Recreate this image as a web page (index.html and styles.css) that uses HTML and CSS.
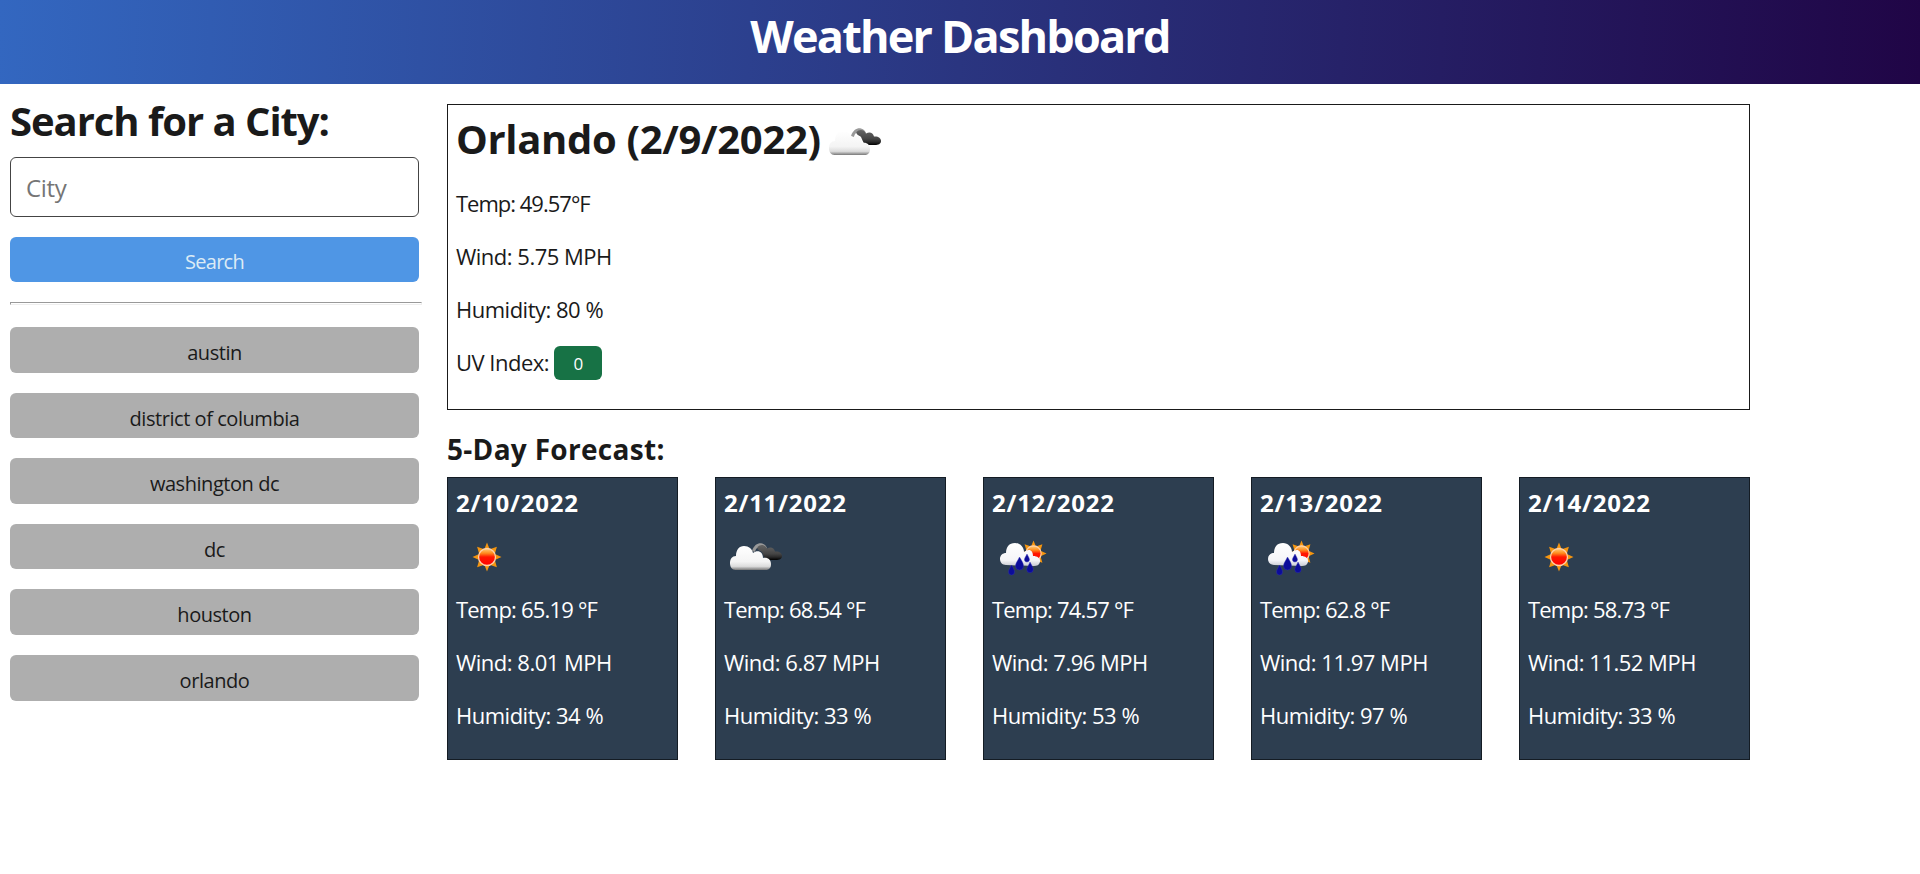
FILE: index.html
```html
<!DOCTYPE html>
<html lang="en">
<head>
<meta charset="utf-8">
<title>Weather Dashboard</title>
<link rel="stylesheet" href="styles.css">
</head>
<body>
<svg class="defs" aria-hidden="true">
  <defs>
    <linearGradient id="white-cloud" x1="0" y1="0" x2="0" y2="1">
      <stop offset="0" stop-color="#fff"/><stop offset=".65" stop-color="#f4f4f4"/><stop offset=".85" stop-color="#dcdcdc"/><stop offset="1" stop-color="#787878"/>
    </linearGradient>
    <linearGradient id="rain-cloud" x1="0" y1="0" x2="0" y2="1">
      <stop offset="0" stop-color="#fff"/><stop offset=".75" stop-color="#f5f5f8"/><stop offset="1" stop-color="#c9cbd3"/>
    </linearGradient>
    <linearGradient id="dark-cloud" x1="0" y1="0" x2="0" y2="1">
      <stop offset="0" stop-color="#666"/><stop offset=".6" stop-color="#444"/><stop offset=".8" stop-color="#2a2a2a"/><stop offset="1" stop-color="#000"/>
    </linearGradient>
    <linearGradient id="sun-core" x1="0" y1="0" x2="0" y2="1">
      <stop offset="0" stop-color="#ffd27a"/><stop offset=".28" stop-color="#ff8a1c"/><stop offset=".5" stop-color="#ff1800"/><stop offset="1" stop-color="#f00"/>
    </linearGradient>
    <symbol id="sun" viewBox="0 0 30 30">
      <path fill="#f5950f" d="M15 .5 17.700 7.200 24.900 4.800 22.800 12 29.500 15 22.800 18 24.900 25.200 17.700 22.800 15 29.500 12.300 22.800 5.100 25.200 7.200 18 .5 15 7.200 12 5.100 4.800 12.300 7.200Z"/>
      <circle cx="15" cy="15" r="8.500" fill="url(#sun-core)" stroke="#ffd0a8" stroke-width="1.300"/>
    </symbol>
    <symbol id="clouds" viewBox="0 0 54 28">
      <path fill="#999" d="M23 9C25 3 29 .8 33 1.500C36 2 37 4 38 6L31 9C30 5 27 5 26 10Z"/>
      <path fill="url(#dark-cloud)" d="M28.500 5C31 2 36 2 38 6.500C42 4.500 45 6 46 9.500C50 9 53 11 53 14C53 17 50 18 47 18H37C35 15 34 12 33 10C31 8 28 8 28.500 5Z"/>
      <path fill="url(#white-cloud)" d="M6.500 28C3 28 1 25 1 21C1 17 3 14 7 14C7 8 10 4 15 4C20 4 23 7 24 11C29 7 34 10 34 16C39 15 42 18 42 22C42 26 40 28 36 28Z"/>
    </symbol>
    <symbol id="rain" viewBox="0 0 48 36">
      <use href="#sun" x="20" y="0" width="27" height="27"/>
      <path fill="url(#rain-cloud)" d="M6 25C2 25 0 22 0 19C0 15 3 13 6 13C6 7 9 3 15 3C20 3 24 7 24 12C29 8 33 10 33 16C38 16 41 19 40 22C39 25 37 26 34 26Z"/>
      <g fill="#0c0c9a" stroke="#3636b8" stroke-width=".4">
        <path d="M19.500 17C22 21 23.500 23.500 23.500 26A4 4 0 0 1 15.500 26C15.500 23.500 17.500 21 19.500 17Z"/>
        <path d="M27 14C28.500 17 29.500 18 29.500 20A2.600 2.600 0 0 1 24.400 20C24.400 18 25.500 17 27 14Z"/>
        <path d="M11.500 25C13.500 28 14.500 30 14.500 32A3 3 0 0 1 8.500 32C8.500 30 10 28 11.500 25Z"/>
        <path d="M30 22C32 26 33.200 27.500 33.200 29.500A3.200 3.200 0 0 1 26.800 29.500C26.800 27.500 28.500 26 30 22Z"/>
      </g>
    </symbol>
  </defs>
</svg>
<header class="banner"><h1 class="banner-title">Weather Dashboard</h1></header>
<div class="layout">
  <aside class="sidebar">
    <h2 class="search-title">Search for a City:</h2>
    <input class="city-input" type="text" placeholder="City">
    <button class="button search">Search</button>
    <hr class="rule">
    <div class="history">
      <button class="button city">austin</button>
      <button class="button city">district of columbia</button>
      <button class="button city">washington dc</button>
      <button class="button city">dc</button>
      <button class="button city">houston</button>
      <button class="button city">orlando</button>
    </div>
  </aside>
  <main class="content">
    <section class="current">
      <h2 class="current-title"><span>Orlando (2/9/2022)</span><svg class="current-icon"><use href="#clouds"/></svg></h2>
      <p class="reading temp">Temp: 49.57°F</p>
      <p class="reading">Wind: 5.75 MPH</p>
      <p class="reading">Humidity: 80 %</p>
      <p class="reading uv"><span class="uv-label">UV Index:</span><span class="uv-badge">0</span></p>
    </section>
    <h3 class="forecast-title">5-Day Forecast:</h3>
    <section class="forecast">
      <article class="day">
        <h4 class="date">2/10/2022</h4>
        <div class="icon"><svg class="icon-sun"><use href="#sun"/></svg></div>
        <p class="reading temp">Temp: 65.19 °F</p><p class="reading">Wind: 8.01 MPH</p><p class="reading">Humidity: 34 %</p>
      </article>
      <article class="day">
        <h4 class="date">2/11/2022</h4>
        <div class="icon"><svg class="icon-clouds"><use href="#clouds"/></svg></div>
        <p class="reading temp">Temp: 68.54 °F</p><p class="reading">Wind: 6.87 MPH</p><p class="reading">Humidity: 33 %</p>
      </article>
      <article class="day">
        <h4 class="date">2/12/2022</h4>
        <div class="icon"><svg class="icon-rain"><use href="#rain"/></svg></div>
        <p class="reading temp">Temp: 74.57 °F</p><p class="reading">Wind: 7.96 MPH</p><p class="reading">Humidity: 53 %</p>
      </article>
      <article class="day">
        <h4 class="date">2/13/2022</h4>
        <div class="icon"><svg class="icon-rain"><use href="#rain"/></svg></div>
        <p class="reading temp">Temp: 62.8 °F</p><p class="reading">Wind: 11.97 MPH</p><p class="reading">Humidity: 97 %</p>
      </article>
      <article class="day">
        <h4 class="date">2/14/2022</h4>
        <div class="icon"><svg class="icon-sun"><use href="#sun"/></svg></div>
        <p class="reading temp">Temp: 58.73 °F</p><p class="reading">Wind: 11.52 MPH</p><p class="reading">Humidity: 33 %</p>
      </article>
    </section>
  </main>
</div>
</body>
</html>
```
FILE: styles.css
```css
* { box-sizing: border-box; }
body { margin: 0; background: #fff; color: #1a1a1a; font-family: "Open Sans", "Noto Sans", sans-serif; }
h1, h2, h3, h4, p { margin: 0; white-space: nowrap; }
.defs { position: absolute; width: 0; height: 0; }
.banner { height: 84px; background: linear-gradient(92deg, #3367c0, #2a3580 50%, #200546); }
.banner-title { color: #fff; font-size: 45px; line-height: 71px; font-weight: 700; text-align: center; letter-spacing: -1.8px; }
.layout { display: flex; gap: 25px; padding: 0 0 0 10px; }
.sidebar { width: 412px; padding-top: 13px; }
.search-title { font-size: 40px; line-height: 47px; height: 60px; letter-spacing: -1.05px; }
.city-input { display: block; width: 409px; height: 60px; margin: 0; padding: 0 15px; border: 1px solid #444; border-radius: 6px; font: 24px "Open Sans", sans-serif; letter-spacing: -0.3px; background: #fff; }
.city-input::placeholder { color: #757575; }
.button { display: block; width: 409px; height: 45.6px; padding: 4px 0 0; border: 0; border-radius: 6px; font: 20px/41px "Open Sans", sans-serif; letter-spacing: -0.45px; text-align: center; }
.city { padding-top: 5px; }
.search { height: 45px; margin-top: 20px; background: #4f96e5; color: #dcebf5; letter-spacing: -0.7px; }
.rule { margin: 20px 0 22px; height: 3px; border: 1px solid; border-color: #999 #eee #eee #999; }
.history { display: grid; gap: 20px; }
.city { background: #aeaeae; color: #1a1a1a; }
.content { width: 1303px; padding-top: 20px; }
.current { height: 306px; padding: 8px; border: 1px solid #1a1a1a; }
.current-title { display: flex; gap: 7px; font-size: 40px; line-height: 52px; height: 64px; letter-spacing: -0.32px; }
.current-icon { width: 54px; height: 28px; margin-top: 14px; }
.reading { font-size: 22px; line-height: 53px; height: 53px; letter-spacing: -0.5px; }
.current .reading { line-height: 52px; }
.current .temp { letter-spacing: -1px; }
.day .temp { letter-spacing: -0.8px; }
.uv { display: flex; gap: 5px; align-items: flex-start; }
.uv-badge { width: 48px; height: 34px; margin-top: 10px; border-radius: 6px; background: #177245; color: #fff; font-size: 17px; line-height: 35px; text-align: center; }
.forecast-title { margin-top: 16px; height: 51px; font-size: 28px; line-height: 46px; letter-spacing: 0.3px; }
.forecast { display: grid; grid-template-columns: repeat(5, 231px); justify-content: space-between; }
.day { height: 283px; padding: 8px; border: 1px solid #141c24; background: #2d3e50; color: #fff; }
.date { height: 47px; font-size: 24px; line-height: 33px; letter-spacing: 0.75px; }
.icon { display: flex; height: 50px; }
.icon-sun { width: 30px; height: 30px; margin: 9px 0 0 16px; }
.icon-clouds { width: 54px; height: 28px; margin: 9px 0 0 5px; }
.icon-rain { width: 48px; height: 36px; margin: 7px 0 0 8px; }
```
